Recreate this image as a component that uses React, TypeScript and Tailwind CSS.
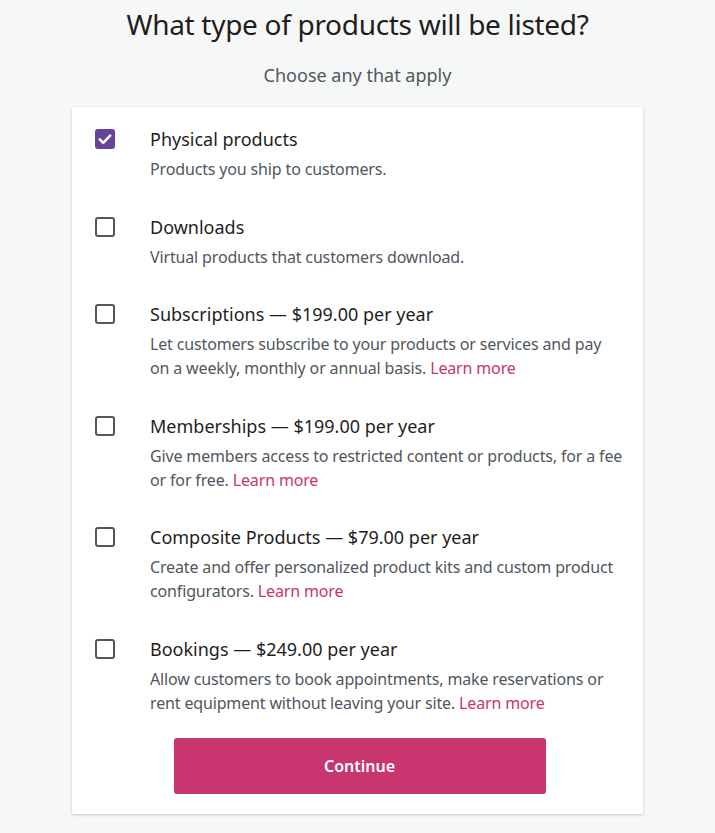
import { useState } from "react";

type Option = {
  id: string;
  title: string;
  price?: string;
  description: string;
  learnMore?: boolean;
};

const options: Option[] = [
  {
    id: "physical",
    title: "Physical products",
    description: "Products you ship to customers.",
  },
  {
    id: "downloads",
    title: "Downloads",
    description: "Virtual products that customers download.",
  },
  {
    id: "subscriptions",
    title: "Subscriptions",
    price: "$199.00 per year",
    description:
      "Let customers subscribe to your products or services and pay on a weekly, monthly or annual basis.",
    learnMore: true,
  },
  {
    id: "memberships",
    title: "Memberships",
    price: "$199.00 per year",
    description:
      "Give members access to restricted content or products, for a fee or for free.",
    learnMore: true,
  },
  {
    id: "composite",
    title: "Composite Products",
    price: "$79.00 per year",
    description:
      "Create and offer personalized product kits and custom product configurators.",
    learnMore: true,
  },
  {
    id: "bookings",
    title: "Bookings",
    price: "$249.00 per year",
    description:
      "Allow customers to book appointments, make reservations or rent equipment without leaving your site.",
    learnMore: true,
  },
];

function Checkbox({ checked }: { checked: boolean }) {
  if (checked) {
    return (
      <span className="flex h-5 w-5 shrink-0 items-center justify-center rounded-[3px] bg-[#674399]">
        <svg viewBox="0 0 20 20" className="h-5 w-5" fill="none">
          <path
            d="M4.8 10.4l3.4 3.4L15.2 6.6"
            stroke="white"
            strokeWidth="2.6"
            strokeLinecap="round"
            strokeLinejoin="round"
          />
        </svg>
      </span>
    );
  }
  return (
    <span className="block h-5 w-5 shrink-0 rounded-[3px] border-2 border-[#50575e] bg-white" />
  );
}

export default function App() {
  const [selected, setSelected] = useState<string[]>(["physical"]);

  const toggle = (id: string) => {
    setSelected((prev) =>
      prev.includes(id) ? prev.filter((x) => x !== id) : [...prev, id]
    );
  };

  return (
    <div className="min-h-screen bg-[#f6f7f7] font-['Noto_Sans',sans-serif] pb-10">
      <h1 className="pt-[6px] text-center text-[28px] leading-[36px] tracking-[-0.3px] text-[#1e1e1e]">
        What type of products will be listed?
      </h1>
      <p className="mt-[21px] text-center text-[18px] leading-6 text-[#50575e]">
        Choose any that apply
      </p>

      <div className="mx-auto mt-5 w-[571px] rounded-[2px] bg-white pb-5 pl-[23px] pr-[19px] pt-[18px] shadow-[0_1px_3px_rgba(0,0,0,0.2)]">
        <div className="flex flex-col gap-[31.6px]">
          {options.map((opt) => (
            <label
              key={opt.id}
              className="flex cursor-pointer items-start gap-[35px]"
              onClick={() => toggle(opt.id)}
            >
              <span className="mt-1">
                <Checkbox checked={selected.includes(opt.id)} />
              </span>
              <span className="block">
                <span className="block text-[18px] leading-7 text-[#1e1e1e]">
                  {opt.title}
                  {opt.price && <> — {opt.price}</>}
                </span>
                <span className="mt-1 block text-[16px] leading-6 tracking-[-0.15px] text-[#50575e]">
                  {opt.description}
                  {opt.learnMore && (
                    <>
                      {" "}
                      <a href="#" className="text-[#c9356e]">
                        Learn more
                      </a>
                    </>
                  )}
                </span>
              </span>
            </label>
          ))}
        </div>

        <button className="mx-auto mt-[23px] block h-14 w-[372px] rounded-[3px] bg-[#c9356e] text-[16px] font-semibold text-white">
          Continue
        </button>
      </div>
    </div>
  );
}
